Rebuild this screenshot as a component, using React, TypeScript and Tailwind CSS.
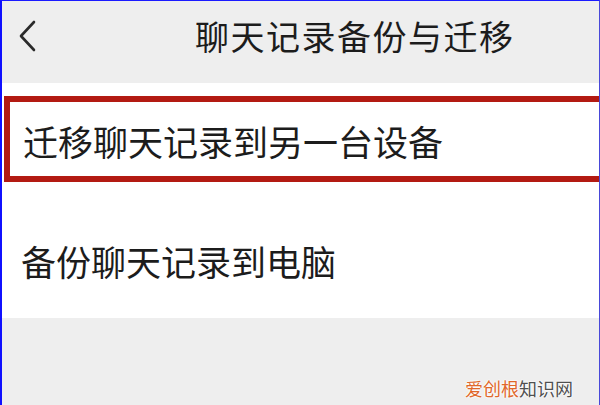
export default function App() {
  return (
    <div
      className="relative h-[405px] w-[600px] overflow-hidden border-l-2 border-r border-t border-l-[#1010ff] border-r-[#4848d8] border-t-[#1a1aff] bg-[#eeeeee] text-[#1c1c1c]"
      style={{ fontFamily: '"Noto Sans CJK SC", "Noto Sans", sans-serif' }}
    >
      {/* header */}
      <div className="flex h-[82px] items-center pb-[12px]">
        <svg
          className="ml-[14px] h-[34px] w-[22px]"
          viewBox="0 0 22 34"
          fill="none"
          stroke="#2a2a2a"
          strokeWidth="2.6"
          strokeLinecap="round"
          strokeLinejoin="round"
        >
          <polyline points="18,3 5,17 18,31" />
        </svg>
        <div className="ml-[157px] text-[34px] leading-none tracking-[1.5px]">
          聊天记录备份与迁移
        </div>
      </div>

      {/* list */}
      <div className="bg-white pt-[13px]">
        <div className="ml-[2px] -mr-[10px] flex h-[86px] items-center border-[6px] border-[#b31a12] pl-[13px] pt-[2px]">
          <span className="text-[35px] leading-none">迁移聊天记录到另一台设备</span>
        </div>
        <div className="flex h-[136px] items-center pl-[19px] pt-[20px]">
          <span className="text-[35px] leading-none">备份聊天记录到电脑</span>
        </div>
      </div>

      {/* watermark */}
      <div
        className="absolute bottom-[8px] right-[26px] text-[18px] leading-none"
        style={{ textShadow: "0 0 2px #fff, 0 0 2px #fff, 0 0 2px #fff" }}
      >
        <span className="text-[#e0672a]">爱创根</span>
        <span className="text-[#505050]">知识网</span>
      </div>
    </div>
  );
}
